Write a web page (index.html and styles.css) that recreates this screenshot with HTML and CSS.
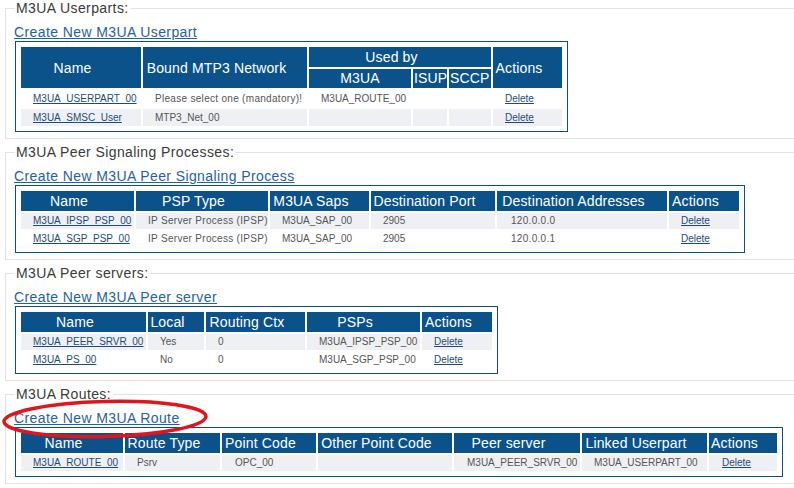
FILE: index.html
```html
<!DOCTYPE html>
<html>
<head>
<meta charset="utf-8">
<title>M3UA</title>
<link rel="stylesheet" href="styles.css">
</head>
<body>
<fieldset class="sec">
  <legend>M3UA Userparts:</legend>
  <a class="create" href="#">Create New M3UA Userpart</a>
  <table class="grid t1">
    <colgroup><col class="c120"><col class="c164"><col class="c102"><col class="c34"><col class="c42"><col class="c69"></colgroup>
    <thead>
      <tr><th rowspan="2">Name</th><th rowspan="2">Bound MTP3 Network</th><th colspan="3">Used by</th><th rowspan="2">Actions</th></tr>
      <tr class="sub"><th class="nc">M3UA</th><th>ISUP</th><th>SCCP</th></tr>
    </thead>
    <tbody>
      <tr><td><a href="#">M3UA_USERPART_00</a></td><td class="wide">Please select one (mandatory)!</td><td>M3UA_ROUTE_00</td><td></td><td></td><td><a href="#">Delete</a></td></tr>
      <tr class="alt"><td><a href="#">M3UA_SMSC_User</a></td><td>MTP3_Net_00</td><td></td><td></td><td></td><td><a href="#">Delete</a></td></tr>
    </tbody>
  </table>
</fieldset>

<fieldset class="sec">
  <legend>M3UA Peer Signaling Processes:</legend>
  <a class="create" href="#">Create New M3UA Peer Signaling Process</a>
  <table class="grid t2">
    <colgroup><col class="c113"><col class="c132"><col class="c99"><col class="c124"><col class="c170"><col class="c70"></colgroup>
    <thead>
      <tr><th>Name</th><th>PSP Type</th><th>M3UA Saps</th><th>Destination Port</th><th>Destination Addresses</th><th>Actions</th></tr>
    </thead>
    <tbody>
      <tr class="alt"><td><a href="#">M3UA_IPSP_PSP_00</a></td><td class="wide">IP Server Process (IPSP)</td><td>M3UA_SAP_00</td><td>2905</td><td class="pad14 wide">120.0.0.0</td><td><a href="#">Delete</a></td></tr>
      <tr><td><a href="#">M3UA_SGP_PSP_00</a></td><td class="wide">IP Server Process (IPSP)</td><td>M3UA_SAP_00</td><td>2905</td><td class="pad14 wide">120.0.0.1</td><td><a href="#">Delete</a></td></tr>
    </tbody>
  </table>
</fieldset>

<fieldset class="sec">
  <legend>M3UA Peer servers:</legend>
  <a class="create" href="#">Create New M3UA Peer server</a>
  <table class="grid t3">
    <colgroup><col class="c125"><col class="c56"><col class="c99"><col class="c113"><col class="c70"></colgroup>
    <thead>
      <tr><th>Name</th><th>Local</th><th>Routing Ctx</th><th>PSPs</th><th>Actions</th></tr>
    </thead>
    <tbody>
      <tr class="alt"><td><a href="#">M3UA_PEER_SRVR_00</a></td><td>Yes</td><td>0</td><td>M3UA_IPSP_PSP_00</td><td><a href="#">Delete</a></td></tr>
      <tr><td><a href="#">M3UA_PS_00</a></td><td>No</td><td>0</td><td>M3UA_SGP_PSP_00</td><td><a href="#">Delete</a></td></tr>
    </tbody>
  </table>
</fieldset>

<fieldset class="sec">
  <legend>M3UA Routes:</legend>
  <a class="create" href="#">Create New M3UA Route</a>
  <table class="grid t4">
    <colgroup><col class="c102"><col class="c95"><col class="c94"><col class="c134"><col class="c126"><col class="c125"><col class="c68"></colgroup>
    <thead>
      <tr><th>Name</th><th>Route Type</th><th>Point Code</th><th>Other Point Code</th><th>Peer server</th><th>Linked Userpart</th><th>Actions</th></tr>
    </thead>
    <tbody>
      <tr class="alt"><td><a href="#">M3UA_ROUTE_00</a></td><td>Psrv</td><td class="pad13">OPC_00</td><td></td><td class="pad13">M3UA_PEER_SRVR_00</td><td>M3UA_USERPART_00</td><td class="pad13"><a href="#">Delete</a></td></tr>
    </tbody>
  </table>
</fieldset>

<svg class="mark" width="214" height="48" viewBox="0 0 214 48" aria-hidden="true">
  <ellipse cx="105" cy="23" rx="101" ry="17.5" fill="none" stroke="#e3141c" stroke-width="3.5" transform="rotate(-1.5 105 23)"/>
</svg>
</body>
</html>
```

FILE: styles.css
```css
html, body {
  margin: 0;
  padding: 0;
  background: #ffffff;
}
body {
  position: relative;
  overflow: hidden;
  font-family: "Liberation Sans", Arial, sans-serif;
  width: 794px;
  height: 488px;
}
.sec {
  margin: 0 -40px 5px 5px;
  padding: 7px 8px 6px 8px;
  border: 1px solid #e2e2e2;
  min-width: 0;
}
.sec legend {
  padding: 0 2px;
  font-size: 14px;
  line-height: 16px;
  letter-spacing: 0.4px;
  color: #3a3a3a;
}
.create {
  display: block;
  width: max-content;
  font-size: 14px;
  line-height: 18px;
  letter-spacing: 0.4px;
  color: #1f62a3;
  text-decoration: underline;
}
.grid {
  table-layout: fixed;
  border: 1px solid #0d4f84;
  padding: 3px;
  border-spacing: 2px;
  margin-left: 1px;
  background: #fff;
}
.t1 { width: 553px; }
.t2 { width: 730px; }
.t3 { width: 483px; }
.t4 { width: 768px; }

.c34 { width: 34px; }
.c42 { width: 42px; }
.c56 { width: 56px; }
.c68 { width: 68px; }
.c69 { width: 69px; }
.c70 { width: 70px; }
.c94 { width: 94px; }
.c95 { width: 95px; }
.c99 { width: 99px; }
.c102 { width: 102px; }
.c113 { width: 113px; }
.c120 { width: 120px; }
.c124 { width: 124px; }
.c125 { width: 125px; }
.c126 { width: 126px; }
.c132 { width: 132px; }
.c134 { width: 134px; }
.c164 { width: 164px; }
.c170 { width: 170px; }

.grid th {
  background: #0b528b;
  color: #ffffff;
  font-weight: normal;
  font-size: 14px;
  letter-spacing: 0.15px;
  height: 20px;
  line-height: 20px;
  padding: 0 18px 0 1px;
  text-align: center;
  white-space: nowrap;
  overflow: visible;
  box-sizing: border-box;
}
.grid th.nc {
  padding: 0;
}
.t1 .sub th {
  height: 19px;
  line-height: 19px;
}
.grid td {
  height: 16px;
  line-height: 16px;
  padding: 0 0 0 12px;
  font-size: 10px;
  color: #555555;
  white-space: nowrap;
  overflow: hidden;
  text-align: left;
  vertical-align: middle;
  box-sizing: border-box;
  background: #ffffff;
}
.grid td.wide {
  letter-spacing: 0.3px;
}
.t1 td {
  height: 17px;
  line-height: 17px;
}
.grid tr.alt td {
  background: #eff0f4;
}
.grid td.pad13 { padding-left: 13px; }
.grid td.pad14 { padding-left: 14px; }
.grid td a {
  color: #1c4c7c;
  text-decoration: underline;
}
.mark {
  position: absolute;
  left: 0;
  top: 396px;
}
```
